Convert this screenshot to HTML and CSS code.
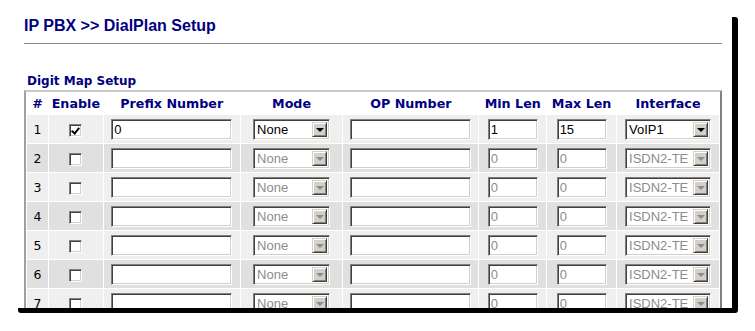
FILE: index.html
```html
<!DOCTYPE html>
<html lang="en">
<head>
  <meta charset="UTF-8" />
  <title>IP PBX - DialPlan Setup</title>
  <link rel="stylesheet" href="styles.css">
</head>
<body>
<div class="stage">
  <div class="shadow"></div>
  <div class="frame">
    <h1 class="page-title">IP PBX &gt;&gt; DialPlan Setup</h1>
    <hr class="rule">

    <div class="section-title">Digit Map Setup</div>
    <table class="digitmap">
      <colgroup>
        <col style="width:21px"><col style="width:54px"><col style="width:136px"><col style="width:102px">
        <col style="width:135px"><col style="width:67px"><col style="width:69px"><col style="width:102px">
      </colgroup>
      <tr class="head">
        <th>#</th><th>Enable</th><th>Prefix Number</th><th>Mode</th>
        <th>OP Number</th><th>Min Len</th><th>Max Len</th><th>Interface</th>
      </tr>
      <tr class="odd">
        <td>1</td>
        <td><input type="checkbox" class="chk" checked></td>
        <td><input type="text" class="txt wide" value="0"></td>
        <td><span class="sel mode"><select><option>None</option></select><span class="btn"><i></i></span></span></td>
        <td><input type="text" class="txt wide" value=""></td>
        <td><input type="text" class="txt short" value="1"></td>
        <td><input type="text" class="txt short" value="15"></td>
        <td><span class="sel iface"><select><option>VoIP1</option></select><span class="btn"><i></i></span></span></td>
      </tr>
      <tr class="even">
        <td>2</td>
        <td><input type="checkbox" class="chk"></td>
        <td><input type="text" class="txt wide"></td>
        <td><span class="sel mode off"><select disabled><option>None</option></select><span class="btn"><i></i></span></span></td>
        <td><input type="text" class="txt wide"></td>
        <td><input type="text" class="txt short" value="0" disabled></td>
        <td><input type="text" class="txt short" value="0" disabled></td>
        <td><span class="sel iface off"><select disabled><option>ISDN2-TE</option></select><span class="btn"><i></i></span></span></td>
      </tr>
      <tr class="odd">
        <td>3</td>
        <td><input type="checkbox" class="chk"></td>
        <td><input type="text" class="txt wide"></td>
        <td><span class="sel mode off"><select disabled><option>None</option></select><span class="btn"><i></i></span></span></td>
        <td><input type="text" class="txt wide"></td>
        <td><input type="text" class="txt short" value="0" disabled></td>
        <td><input type="text" class="txt short" value="0" disabled></td>
        <td><span class="sel iface off"><select disabled><option>ISDN2-TE</option></select><span class="btn"><i></i></span></span></td>
      </tr>
      <tr class="even">
        <td>4</td>
        <td><input type="checkbox" class="chk"></td>
        <td><input type="text" class="txt wide"></td>
        <td><span class="sel mode off"><select disabled><option>None</option></select><span class="btn"><i></i></span></span></td>
        <td><input type="text" class="txt wide"></td>
        <td><input type="text" class="txt short" value="0" disabled></td>
        <td><input type="text" class="txt short" value="0" disabled></td>
        <td><span class="sel iface off"><select disabled><option>ISDN2-TE</option></select><span class="btn"><i></i></span></span></td>
      </tr>
      <tr class="odd">
        <td>5</td>
        <td><input type="checkbox" class="chk"></td>
        <td><input type="text" class="txt wide"></td>
        <td><span class="sel mode off"><select disabled><option>None</option></select><span class="btn"><i></i></span></span></td>
        <td><input type="text" class="txt wide"></td>
        <td><input type="text" class="txt short" value="0" disabled></td>
        <td><input type="text" class="txt short" value="0" disabled></td>
        <td><span class="sel iface off"><select disabled><option>ISDN2-TE</option></select><span class="btn"><i></i></span></span></td>
      </tr>
      <tr class="even">
        <td>6</td>
        <td><input type="checkbox" class="chk"></td>
        <td><input type="text" class="txt wide"></td>
        <td><span class="sel mode off"><select disabled><option>None</option></select><span class="btn"><i></i></span></span></td>
        <td><input type="text" class="txt wide"></td>
        <td><input type="text" class="txt short" value="0" disabled></td>
        <td><input type="text" class="txt short" value="0" disabled></td>
        <td><span class="sel iface off"><select disabled><option>ISDN2-TE</option></select><span class="btn"><i></i></span></span></td>
      </tr>
      <tr class="odd">
        <td>7</td>
        <td><input type="checkbox" class="chk"></td>
        <td><input type="text" class="txt wide"></td>
        <td><span class="sel mode off"><select disabled><option>None</option></select><span class="btn"><i></i></span></span></td>
        <td><input type="text" class="txt wide"></td>
        <td><input type="text" class="txt short" value="0" disabled></td>
        <td><input type="text" class="txt short" value="0" disabled></td>
        <td><span class="sel iface off"><select disabled><option>ISDN2-TE</option></select><span class="btn"><i></i></span></span></td>
      </tr>
    </table>
  </div>
</div>
</body>
</html>
```

FILE: styles.css
```css
body {
  margin: 0;
  padding: 0;
  background: #ffffff;
  font-family: 'DejaVu Sans', Verdana, sans-serif;
}

/* card and its hard black shadow share one grid cell */
.stage {
  display: grid;
  width: 738px;
}
.shadow,
.frame {
  grid-area: 1 / 1;
}
.shadow {
  margin: 17px 0 0 18px;
  width: 720px;
  height: 296px;
  background: #000;
  border-radius: 3px;
}
.frame {
  width: 732px;
  height: 308px;
  overflow: hidden;
  background: #ffffff;
  padding: 17px 10px 0 24px;
  box-sizing: border-box;
}

.page-title {
  margin: 0;
  font-family: 'Liberation Sans', Arial, sans-serif;
  font-size: 16px;
  line-height: 18px;
  font-weight: bold;
  color: #000080;
}

.rule {
  margin: 8px 0 0 0;
  border: 0;
  border-top: 1px solid #8a8a8a;
  height: 0;
}

.section-title {
  margin-top: 29px;
  padding-left: 3px;
  font-size: 12px;
  line-height: 16px;
  font-weight: bold;
  color: #000080;
}

.digitmap {
  margin-top: 1px;
  table-layout: fixed;
  border-collapse: separate;
  border-spacing: 1px;
  border: 2px solid;
  border-color: #c8c8c8 #808080 #808080 #a0a0a0;
  background: #ffffff;
  font-size: 12.5px;
}
.digitmap th {
  height: 21px;
  padding: 0;
  font-size: 12.7px;
  font-weight: bold;
  color: #000080;
  text-align: center;
  white-space: nowrap;
  background: #ffffff;
}
.digitmap td {
  height: 28px;
  padding: 0;
  text-align: center;
  vertical-align: middle;
  color: #000;
}
.odd td { background: #efefef; }
.even td { background: #e0e0e0; }

/* classic sunken text box */
.txt {
  box-sizing: border-box;
  height: 21px;
  margin: 0;
  padding: 1px 2px 0 2px;
  border: 1px solid;
  border-color: #808080 #ffffff #ffffff #808080;
  box-shadow: inset 1px 1px 0 #404040, inset -1px -1px 0 #d4d0c8;
  background: #ffffff;
  font-family: 'Liberation Sans', Arial, sans-serif;
  font-size: 13px;
  color: #000;
  vertical-align: middle;
}
.txt.wide { width: 121px; }
.txt.short { width: 50px; }
.txt:disabled { color: #8c8c8c; background: #ffffff; }

.chk {
  appearance: none;
  -webkit-appearance: none;
  box-sizing: border-box;
  width: 13px;
  height: 13px;
  margin: 0;
  border: 1px solid;
  border-color: #808080 #ffffff #ffffff #808080;
  box-shadow: inset 1px 1px 0 #404040, inset -1px -1px 0 #d4d0c8;
  background: #ffffff;
  vertical-align: middle;
  position: relative;
}
.chk:checked::after {
  content: "";
  position: absolute;
  left: 3px;
  top: 1px;
  width: 3px;
  height: 6px;
  border: solid #000;
  border-width: 0 2px 2px 0;
  transform: rotate(40deg);
}

/* dropdown: a sunken box with a raised arrow button */
.sel {
  display: inline-flex;
  box-sizing: border-box;
  height: 21px;
  padding: 2px;
  border: 1px solid;
  border-color: #808080 #ffffff #ffffff #808080;
  box-shadow: inset 1px 1px 0 #404040, inset -1px -1px 0 #d4d0c8;
  background: #ffffff;
  vertical-align: middle;
}
.sel.mode { width: 77px; }
.sel.iface { width: 86px; }
.sel select {
  appearance: none;
  -webkit-appearance: none;
  flex: 1;
  min-width: 0;
  margin: 0;
  padding: 0 0 0 1px;
  border: 0;
  background: transparent;
  font-family: 'Liberation Sans', Arial, sans-serif;
  font-size: 13px;
  line-height: 15px;
  color: #000;
  opacity: 1;
}
.sel.off select { color: #8c8c8c; }
.sel .btn {
  display: flex;
  align-items: center;
  justify-content: center;
  box-sizing: border-box;
  width: 15px;
  border: 1px solid;
  border-color: #d4d0c8 #404040 #404040 #d4d0c8;
  box-shadow: inset 1px 1px 0 #ffffff, inset -1px -1px 0 #808080;
  background: #d4d0c8;
}
.sel .btn i {
  width: 0;
  height: 0;
  border-left: 4px solid transparent;
  border-right: 4px solid transparent;
  border-top: 4px solid #000;
  margin-top: 1px;
}
.sel.off .btn i { border-top-color: #8c8c8c; }
```
